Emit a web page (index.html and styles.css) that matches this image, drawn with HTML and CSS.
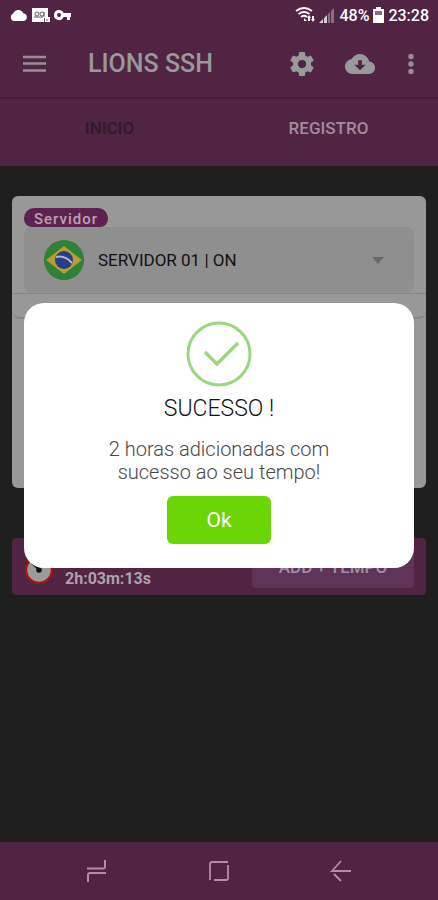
FILE: index.html
```html
<!DOCTYPE html>
<html lang="pt-BR">
<head>
<meta charset="utf-8">
<meta name="viewport" content="width=device-width, initial-scale=1">
<title>LIONS SSH</title>
<link rel="stylesheet" href="styles.css">
</head>
<body>
<div class="app">
  <div class="status">
    <div class="status-group">
      <svg width="19" height="14" viewBox="0 0 18 14"><path d="M4 13a4 4 0 0 1-.3-7.500A5.500 5.500 0 0 1 14 5.500 3.800 3.800 0 0 1 14.300 13z" fill="#fff"/></svg>
      <svg width="18" height="16" viewBox="0 0 18 16"><path d="M0 1h16v9h2v5H0z" fill="#fff"/><g fill="none" stroke="#6b5563"><circle cx="5" cy="7" r="2"/><circle cx="10" cy="7" r="2"/><path d="M2 10h9M12 5v5M12.500 11v4M15 12v2"/></g></svg>
      <svg width="18" height="12" viewBox="0 0 18 12"><path fill-rule="evenodd" d="M5 1a5 5 0 0 1 4.600 3H17v4h-1v3h-3V8H9.600A5 5 0 1 1 5 1zm0 3a2 2 0 1 0 0 4 2 2 0 0 0 0-4z" fill="#fff"/></svg>
    </div>
    <div class="status-group">
      <svg width="20" height="16" viewBox="0 0 20 16"><g fill="none" stroke="#fff" stroke-width="1.800"><path d="M1 4q8-6 16 0M3.500 7q5.500-4 11 0M6 10q3-2.500 6 0"/></g><path d="M9 11l3 3h-3zM14 8l2 3h-1v3h-2v-3h-1zM18 15l-2-3h1v-3h2v3h1z" fill="#fff"/></svg>
      <svg width="16" height="15" viewBox="0 0 16 15"><path d="M0 15l4-4v4zM5 15v-5l3-3v8z" fill="#d8cdd5"/><path d="M9 15V6l2-2v11zM12 15V3l3-3v15z" fill="#8b6e82"/></svg>
      <span>48%</span>
      <svg width="11" height="16" viewBox="0 0 11 16"><path d="M3 0h5v2h3v14H0V2h3z" fill="#fff"/><path d="M2 4h7v4H2z" fill="#8b6e82"/></svg>
      <span>23:28</span>
    </div>
  </div>

  <header class="toolbar">
    <button aria-label="Menu"><svg width="24" height="18" viewBox="0 0 24 18"><path d="M0 2h23M0 8.500h23M0 15.500h23" stroke="#979197" stroke-width="2.400"/></svg></button>
    <h1 class="title">LIONS SSH</h1>
    <div class="actions">
      <button aria-label="Configurações"><svg width="30" height="30" viewBox="0 0 24 24"><path fill="#999" d="M19.140 12.940c.040-.300.060-.610.060-.940 0-.320-.020-.640-.070-.940l2.030-1.580a.490.490 0 0 0 .120-.610l-1.920-3.320a.488.488 0 0 0-.590-.220l-2.390.960c-.500-.380-1.030-.700-1.620-.940l-.360-2.540a.484.484 0 0 0-.480-.410h-3.840c-.240 0-.430.170-.470.410l-.360 2.540c-.590.240-1.130.570-1.620.940l-2.390-.960c-.220-.080-.470 0-.590.220L2.740 8.870c-.120.210-.080.470.120.610l2.030 1.580c-.050.300-.090.630-.090.940s.020.640.070.940l-2.030 1.580a.490.490 0 0 0-.120.610l1.920 3.320c.120.220.370.290.590.220l2.390-.960c.500.380 1.030.700 1.620.940l.360 2.540c.050.240.240.410.480.410h3.840c.240 0 .440-.170.470-.410l.360-2.540c.590-.240 1.130-.560 1.620-.940l2.390.960c.220.080.470 0 .590-.220l1.920-3.320c.120-.220.070-.470-.120-.610zM12 15.300A3.300 3.300 0 1 1 12 8.700a3.300 3.300 0 0 1 0 6.600z"/></svg></button>
      <button aria-label="Baixar"><svg width="30" height="30" viewBox="0 0 24 24"><path fill="#999" d="M19.350 10.040A7.490 7.490 0 0 0 12 4C9.110 4 6.600 5.640 5.350 8.040A5.994 5.994 0 0 0 0 14c0 3.310 2.690 6 6 6h13c2.760 0 5-2.240 5-5 0-2.640-2.050-4.780-4.650-4.960z"/><path fill="#502442" d="M16.500 12.500l-4.500 4.500-4.500-4.500h3V9h3v3.500z"/></svg></button>
      <button class="more" aria-label="Mais opções"><svg width="8" height="22" viewBox="0 0 8 22"><g fill="#979197"><circle cx="4" cy="3.500" r="2.700"/><circle cx="4" cy="11" r="2.700"/><circle cx="4" cy="18.500" r="2.700"/></g></svg></button>
    </div>
  </header>

  <nav class="tabs">
    <a class="tab tab-current" href="#inicio">INICIO</a>
    <a class="tab" href="#registro">REGISTRO</a>
  </nav>

  <main class="content">
    <section class="card">
      <div class="server">
        <label class="chip" for="server">Servidor</label>
        <div class="picker">
          <svg width="40" height="40" viewBox="0 0 40 40"><circle cx="20" cy="20" r="20" fill="#2e8136"/><path d="M2 20L20 6l18 14-18 14z" fill="#b99b37"/><circle cx="20" cy="20" r="9" fill="#283e86"/><path d="M12 17q9-2 16 6" fill="none" stroke="#b4b8c5" stroke-width="2"/></svg>
          <select class="select" id="server"><option>SERVIDOR 01 | ON</option></select>
          <svg width="12" height="7" viewBox="0 0 12 7"><path d="M0 0h12L6 7z" fill="#696969"/></svg>
        </div>
      </div>
      <div class="strip"></div>
    </section>

    <section class="timer">
      <svg width="30" height="30" viewBox="0 0 30 30"><circle cx="15" cy="15" r="13" fill="#9b9b9b" stroke="#a01515" stroke-width="2.500"/><path d="M8 8l7 6" stroke="#111" stroke-width="2.500"/><circle cx="15" cy="15" r="2.800" fill="#111"/></svg>
      <span class="time">2h:03m:13s</span>
      <button class="add">ADD + TEMPO</button>
    </section>
  </main>

  <nav class="system">
    <button aria-label="Recentes"><svg width="22" height="24" viewBox="0 0 22 24"><path d="M1 9.500h16q2 0 2-2V1M20 14H4q-2 0-2 2v7" fill="none" stroke="#b58cab" stroke-width="2"/></svg></button>
    <button aria-label="Início"><svg width="22" height="22" viewBox="0 0 22 22"><path d="M20 2H4Q2 2 2 4v16M6 20h12q2 0 2-2V5" fill="none" stroke="#b58cab" stroke-width="1.800"/></svg></button>
    <button aria-label="Voltar"><svg width="22" height="22" viewBox="0 0 22 22"><path d="M21 11H2L11 1M4 14l7 7" fill="none" stroke="#b58cab" stroke-width="1.800"/></svg></button>
  </nav>
</div>

<div class="overlay">
  <div class="dialog" role="dialog" aria-modal="true" aria-labelledby="dialog-title">
    <svg width="66" height="66" viewBox="0 0 66 66"><g fill="none" stroke="#9bd77f"><circle cx="33" cy="33" r="31" stroke-width="3"/><path d="M19 31l12 12 21-21" stroke-width="3.500"/></g></svg>
    <h2 class="dialog-title" id="dialog-title">SUCESSO !</h2>
    <p class="message">2 horas adicionadas com<br>sucesso ao seu tempo!</p>
    <button class="ok">Ok</button>
  </div>
</div>
</body>
</html>
```

FILE: styles.css
```css
* {
  box-sizing: border-box;
}

body {
  margin: 0;
  background: #1f1f1f;
  color: #999;
  font-family: Roboto, sans-serif;
}

button {
  border: 0;
  padding: 0;
  background: none;
  font-family: inherit;
}

svg {
  display: block;
  flex: none;
}

.app {
  display: flex;
  flex-direction: column;
  min-height: 100vh;
}

.status {
  display: flex;
  justify-content: space-between;
  align-items: center;
  height: 30px;
  padding: 0 9px;
  background: #502442;
  color: #fff;
  font-size: 16px;
  font-weight: 500;
}

.status-group {
  display: flex;
  align-items: center;
  gap: 4px;
}

.toolbar {
  display: flex;
  align-items: center;
  height: 69px;
  padding: 0 23px;
  background: #502442;
  border-bottom: 2px solid #471c39;
}

.title {
  flex: 1;
  margin: 0 0 0 41px;
  font-size: 25px;
  font-weight: 500;
  white-space: nowrap;
}

.actions {
  display: flex;
  align-items: center;
  gap: 28px;
}

.more {
  margin-left: 4px;
}

.tabs {
  display: flex;
  height: 67px;
  padding-bottom: 9px;
  background: #502442;
}

.tab {
  display: flex;
  flex: 1;
  align-items: center;
  justify-content: center;
  color: #a48b9d;
  font-size: 17px;
  font-weight: 500;
  text-decoration: none;
}

.tab-current {
  color: #2e1b2b;
}

.content {
  flex: 1;
  padding: 30px 12px;
}

.card {
  min-height: 292px;
  border-radius: 6px;
  background: #989898;
}

.server {
  padding: 12px 12px 0;
}

.chip {
  display: block;
  width: max-content;
  height: 19px;
  padding: 0 10px;
  border-radius: 10px 10px 8px 8px;
  background: #5f2250;
  color: #b8a2b1;
  font-size: 15px;
  font-weight: 500;
  letter-spacing: 1px;
  line-height: 22px;
}

.picker {
  display: flex;
  align-items: center;
  gap: 14px;
  height: 66px;
  padding: 0 30px 0 20px;
  border-radius: 8px;
  background: #8f8f8f;
}

.select {
  flex: 1;
  min-width: 0;
  padding: 0;
  border: 0;
  appearance: none;
  background: none;
  color: #111;
  font-family: inherit;
  font-size: 17px;
}

.strip {
  height: 26px;
  border: solid #858585;
  border-width: 1px 0 2px;
  border-radius: 0 0 8px 8px;
}

.timer {
  display: flex;
  align-items: flex-end;
  height: 57px;
  margin-top: 50px;
  padding: 7px 12px;
  border-radius: 4px;
  background: #502442;
}

.timer svg {
  align-self: center;
  margin-top: 6px;
}

.time {
  flex: 1;
  margin-left: 11px;
  color: #b0a0ac;
  font-size: 16px;
  font-weight: 700;
  line-height: 18px;
}

.add {
  width: 162px;
  height: 42px;
  border-radius: 4px;
  background: #5e3558;
  color: #a090a0;
  font-size: 17px;
  font-weight: 500;
}

.system {
  display: flex;
  align-items: center;
  justify-content: space-between;
  height: 58px;
  padding: 0 86px;
  background: #502442;
}

.overlay {
  position: fixed;
  inset: 0;
  display: grid;
  place-items: center;
  padding: 0 24px 29px;
}

.dialog {
  display: flex;
  flex-direction: column;
  align-items: center;
  width: 100%;
  padding: 18px 24px 24px;
  border-radius: 20px;
  background: #fff;
  text-align: center;
}

.dialog-title {
  margin: 8px 0 15px;
  color: #111;
  font-size: 23px;
  font-weight: 300;
  line-height: 28px;
}

.message {
  margin: 0 0 12px;
  color: #484848;
  font-size: 20px;
  font-weight: 300;
  line-height: 23px;
}

.ok {
  width: 104px;
  height: 48px;
  border-radius: 6px;
  background: #6bd505;
  color: #fff;
  font-size: 21px;
}
```
